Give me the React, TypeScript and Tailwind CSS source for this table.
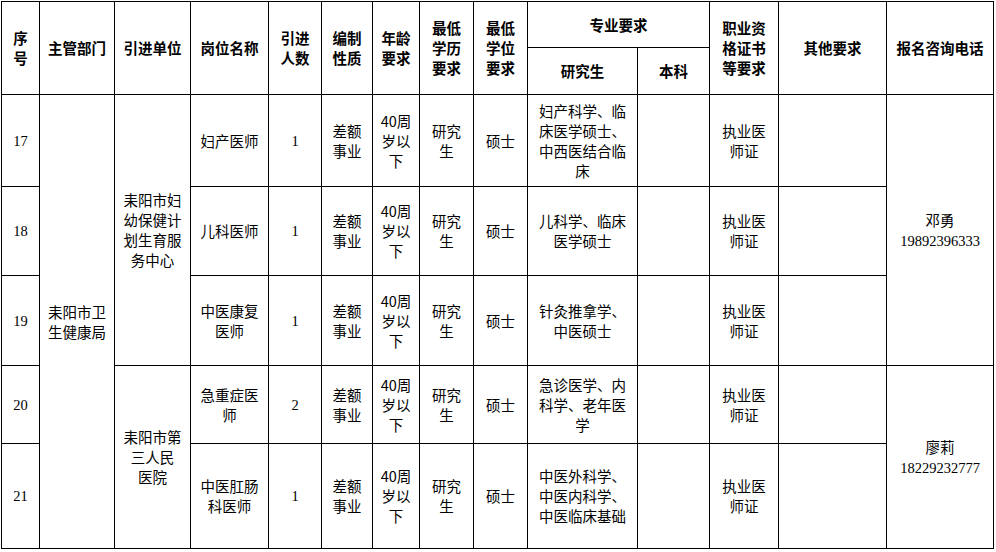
import React from "react";

const cjk = { fontFamily: '"Noto Sans CJK SC", sans-serif' };
const serif = { fontFamily: '"Liberation Serif", "Noto Sans CJK SC", serif' };

function Lines({ lines }: { lines: string[] }) {
  return (
    <>
      {lines.map((l, i) => (
        <React.Fragment key={i}>
          {i > 0 && <br />}
          {l}
        </React.Fragment>
      ))}
    </>
  );
}

const td = "border border-black text-center align-middle p-0 text-[14.5px] leading-[20px] text-black font-normal";
const th = "border border-black text-center align-middle p-0 text-[14.5px] leading-[20px] text-black font-bold";

type Row = {
  no: string;
  job: string[];
  count: string;
  spec: string[];
  h: string;
};

const rows: Row[] = [
  { no: "17", job: ["妇产医师"], count: "1", spec: ["妇产科学、临", "床医学硕士、", "中西医结合临", "床"], h: "h-[92px]" },
  { no: "18", job: ["儿科医师"], count: "1", spec: ["儿科学、临床", "医学硕士"], h: "h-[89px]" },
  { no: "19", job: ["中医康复", "医师"], count: "1", spec: ["针灸推拿学、", "中医硕士"], h: "h-[90px]" },
  { no: "20", job: ["急重症医", "师"], count: "2", spec: ["急诊医学、内", "科学、老年医", "学"], h: "h-[78px]" },
  { no: "21", job: ["中医肛肠", "科医师"], count: "1", spec: ["中医外科学、", "中医内科学、", "中医临床基础"], h: "h-[105px]" },
];

export default function App() {
  const widths = [38, 75, 76, 78, 53, 51, 47, 54, 54, 110, 72, 69, 108, 107];
  return (
    <div className="w-[996px] h-[552px] bg-white overflow-hidden pt-[1px] pl-[1px]">
      <table className="border-collapse table-fixed w-[993px]" style={cjk}>
        <colgroup>
          {widths.map((w, i) => (
            <col key={i} style={{ width: w }} />
          ))}
        </colgroup>
        <thead>
          <tr className="h-[46px]">
            <th rowSpan={2} className={th}><Lines lines={["序", "号"]} /></th>
            <th rowSpan={2} className={th}>主管部门</th>
            <th rowSpan={2} className={th}>引进单位</th>
            <th rowSpan={2} className={th}>岗位名称</th>
            <th rowSpan={2} className={th}><Lines lines={["引进", "人数"]} /></th>
            <th rowSpan={2} className={th}><Lines lines={["编制", "性质"]} /></th>
            <th rowSpan={2} className={th}><Lines lines={["年龄", "要求"]} /></th>
            <th rowSpan={2} className={th}><Lines lines={["最低", "学历", "要求"]} /></th>
            <th rowSpan={2} className={th}><Lines lines={["最低", "学位", "要求"]} /></th>
            <th colSpan={2} className={th}>专业要求</th>
            <th rowSpan={2} className={th}><Lines lines={["职业资", "格证书", "等要求"]} /></th>
            <th rowSpan={2} className={th}>其他要求</th>
            <th rowSpan={2} className={th}>报名咨询电话</th>
          </tr>
          <tr className="h-[47px]">
            <th className={th}>研究生</th>
            <th className={th}>本科</th>
          </tr>
        </thead>
        <tbody>
          {rows.map((r, i) => (
            <tr key={r.no} className={r.h}>
              <td className={td} style={serif}>{r.no}</td>
              {i === 0 && (
                <td rowSpan={5} className={td}>
                  <Lines lines={["耒阳市卫", "生健康局"]} />
                </td>
              )}
              {i === 0 && (
                <td rowSpan={3} className={td}>
                  <Lines lines={["耒阳市妇", "幼保健计", "划生育服", "务中心"]} />
                </td>
              )}
              {i === 3 && (
                <td rowSpan={2} className={td}>
                  <Lines lines={["耒阳市第", "三人民", "医院"]} />
                </td>
              )}
              <td className={td}><Lines lines={r.job} /></td>
              <td className={td} style={serif}>{r.count}</td>
              <td className={td}><Lines lines={["差额", "事业"]} /></td>
              <td className={td}><Lines lines={["40周", "岁以", "下"]} /></td>
              <td className={td}><Lines lines={["研究", "生"]} /></td>
              <td className={td}>硕士</td>
              <td className={td}><Lines lines={r.spec} /></td>
              <td className={td}></td>
              <td className={td}><Lines lines={["执业医", "师证"]} /></td>
              <td className={td}></td>
              {i === 0 && (
                <td rowSpan={3} className={td}>
                  邓勇
                  <br />
                  <span style={serif}>19892396333</span>
                </td>
              )}
              {i === 3 && (
                <td rowSpan={2} className={td}>
                  廖莉
                  <br />
                  <span style={serif}>18229232777</span>
                </td>
              )}
            </tr>
          ))}
        </tbody>
      </table>
    </div>
  );
}
